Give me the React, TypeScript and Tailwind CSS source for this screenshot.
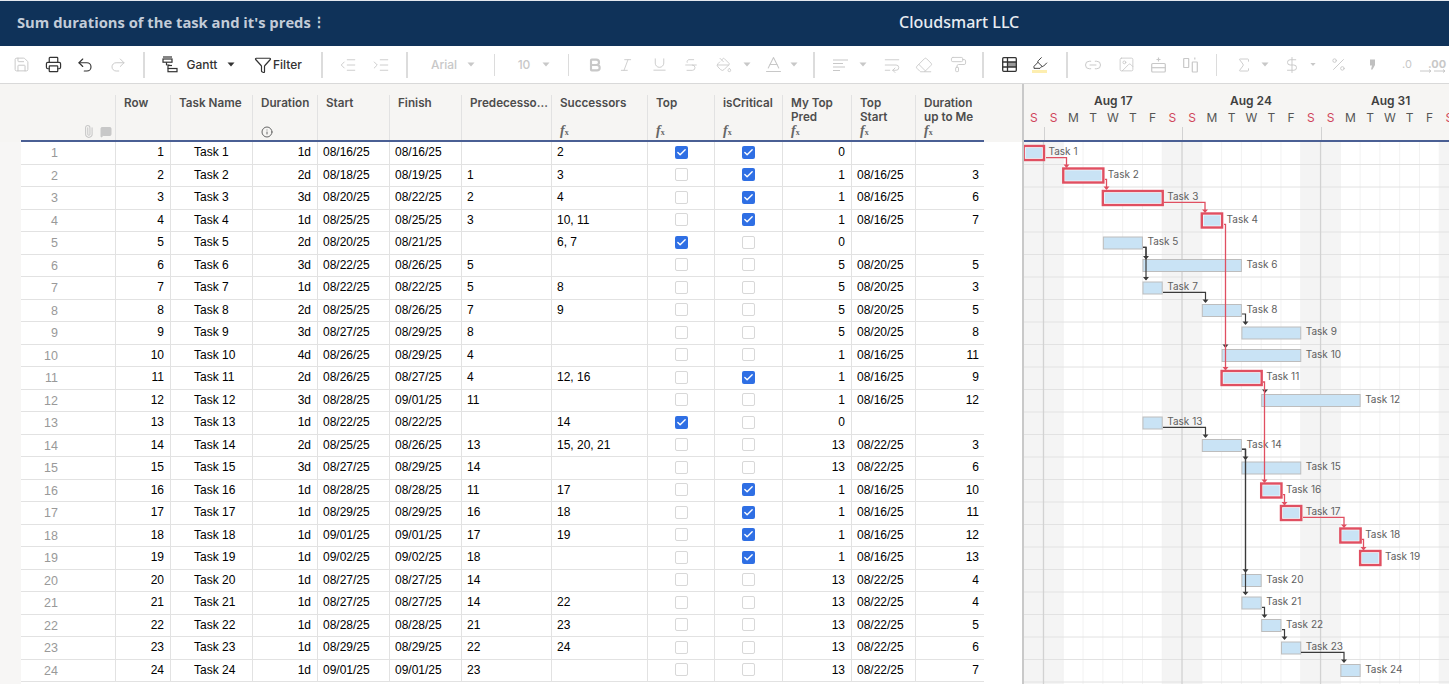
import type { ReactNode } from "react";
import {
  Baseline,
  Bold,
  DollarSign,
  Eraser,
  Highlighter,
  Image,
  IndentDecrease,
  IndentIncrease,
  Info,
  Italic,
  Link2,
  MessageSquare,
  PaintBucket,
  PaintRoller,
  Paperclip,
  Percent,
  Printer,
  Redo2,
  Save,
  Sigma,
  Strikethrough,
  Underline,
  Undo2,
  WrapText,
  Funnel,
  Check,
} from "lucide-react";

type Task = {
  id: number;
  dur: string;
  start: string;
  finish: string;
  pred: string;
  succ: string;
  top: boolean;
  crit: boolean;
  myTop: number;
  topStart: string;
  upTo: string;
  from: number;
  to: number;
};

const t = (
  id: number,
  dur: string,
  start: string,
  finish: string,
  pred: string,
  succ: string,
  top: boolean,
  crit: boolean,
  myTop: number,
  topStart: string,
  upTo: string,
  from: number,
  to: number,
): Task => ({ id, dur, start, finish, pred, succ, top, crit, myTop, topStart, upTo, from, to });

const tasks: Task[] = [
  t(1, "1d", "08/16/25", "08/16/25", "", "2", true, true, 0, "", "", 0, 1),
  t(2, "2d", "08/18/25", "08/19/25", "1", "3", false, true, 1, "08/16/25", "3", 2, 4),
  t(3, "3d", "08/20/25", "08/22/25", "2", "4", false, true, 1, "08/16/25", "6", 4, 7),
  t(4, "1d", "08/25/25", "08/25/25", "3", "10, 11", false, true, 1, "08/16/25", "7", 9, 10),
  t(5, "2d", "08/20/25", "08/21/25", "", "6, 7", true, false, 0, "", "", 4, 6),
  t(6, "3d", "08/22/25", "08/26/25", "5", "", false, false, 5, "08/20/25", "5", 6, 11),
  t(7, "1d", "08/22/25", "08/22/25", "5", "8", false, false, 5, "08/20/25", "3", 6, 7),
  t(8, "2d", "08/25/25", "08/26/25", "7", "9", false, false, 5, "08/20/25", "5", 9, 11),
  t(9, "3d", "08/27/25", "08/29/25", "8", "", false, false, 5, "08/20/25", "8", 11, 14),
  t(10, "4d", "08/26/25", "08/29/25", "4", "", false, false, 1, "08/16/25", "11", 10, 14),
  t(11, "2d", "08/26/25", "08/27/25", "4", "12, 16", false, true, 1, "08/16/25", "9", 10, 12),
  t(12, "3d", "08/28/25", "09/01/25", "11", "", false, false, 1, "08/16/25", "12", 12, 17),
  t(13, "1d", "08/22/25", "08/22/25", "", "14", true, false, 0, "", "", 6, 7),
  t(14, "2d", "08/25/25", "08/26/25", "13", "15, 20, 21", false, false, 13, "08/22/25", "3", 9, 11),
  t(15, "3d", "08/27/25", "08/29/25", "14", "", false, false, 13, "08/22/25", "6", 11, 14),
  t(16, "1d", "08/28/25", "08/28/25", "11", "17", false, true, 1, "08/16/25", "10", 12, 13),
  t(17, "1d", "08/29/25", "08/29/25", "16", "18", false, true, 1, "08/16/25", "11", 13, 14),
  t(18, "1d", "09/01/25", "09/01/25", "17", "19", false, true, 1, "08/16/25", "12", 16, 17),
  t(19, "1d", "09/02/25", "09/02/25", "18", "", false, true, 1, "08/16/25", "13", 17, 18),
  t(20, "1d", "08/27/25", "08/27/25", "14", "", false, false, 13, "08/22/25", "4", 11, 12),
  t(21, "1d", "08/27/25", "08/27/25", "14", "22", false, false, 13, "08/22/25", "4", 11, 12),
  t(22, "1d", "08/28/25", "08/28/25", "21", "23", false, false, 13, "08/22/25", "5", 12, 13),
  t(23, "1d", "08/29/25", "08/29/25", "22", "24", false, false, 13, "08/22/25", "6", 13, 14),
  t(24, "1d", "09/01/25", "09/01/25", "23", "", false, false, 13, "08/22/25", "7", 16, 17),
];

const RED = "#e04f61";
const DARK = "#3a3a3a";
const ROW = 22.5;
const DAY = 19.79;
const X0 = 1023.7;

// elbow links, measured off the chart: [startX, startY, elbowX, tipY]
const redLinks = [
  [1046, 157.7, 1066.5, 167],
  [1105, 179.3, 1106.5, 189],
  [1164, 202.3, 1205, 212],
  [1224, 224.3, 1225.5, 369.5],
  [1263, 382, 1264.5, 482],
  [1283, 494.7, 1284.5, 504.5],
  [1303, 517.3, 1344, 527],
  [1362, 539.3, 1363.5, 549.5],
];
const darkLinks = [
  [1143, 247.3, 1146, 258.5],
  [1143, 247.3, 1146, 279.5],
  [1163, 292.3, 1205.5, 302],
  [1242, 314, 1245.5, 324],
  [1225, 345, 1225.5, 347],
  [1265, 390, 1265, 392],
  [1163, 427.3, 1205.5, 437],
  [1242, 449.3, 1245.5, 459],
  [1242, 449.3, 1245.5, 571.7],
  [1242, 449.3, 1245.5, 594.3],
  [1262, 607.3, 1264.5, 617],
  [1282, 629.7, 1284.5, 639],
  [1301, 652.3, 1344, 662],
];

const sep = "h-[26px] w-[2px] bg-[#dcdcdc]";
const dis = "text-[#c8c8c8]";

function Slot({ className, children }: { className: string; children?: ReactNode }) {
  return <div className={`flex h-full shrink-0 items-center justify-center whitespace-nowrap ${className}`}>{children}</div>;
}

function Caret({ dark }: { dark?: boolean }) {
  return (
    <svg width="8" height="5" viewBox="0 0 8 5" className={dark ? "text-[#333]" : "text-[#c8c8c8]"}>
      <path d="M0.5 0.5h7L4 4.5z" fill="currentColor" />
    </svg>
  );
}

function GanttIcon() {
  return (
    <svg width="16" height="17" viewBox="0 0 16 17" fill="none" stroke="#333" strokeWidth="1.2">
      <path d="M1 1h9" />
      <rect x="1" y="3" width="9" height="3.2" />
      <path d="M4.5 6.2v3M7.5 9h-3" />
      <path d="M6 9.5v3" />
      <path d="M6 9.5h4" />
      <rect x="6" y="12.5" width="9" height="3.2" />
    </svg>
  );
}

function GridIcon() {
  return (
    <svg width="15" height="15" viewBox="0 0 15 15" fill="none" stroke="#333" strokeWidth="1.3">
      <rect x="5.5" y="5" width="9" height="5" fill="#9a9a9a" stroke="none" />
      <rect x="0.7" y="0.7" width="13.6" height="13.6" rx="1" />
      <path d="M0.7 5h13.6M0.7 10h13.6M5.5 0.7v13.6" />
    </svg>
  );
}

function RowInsertIcon() {
  return (
    <svg width="15" height="16" viewBox="0 0 15 16" fill="none" stroke="#c8c8c8" strokeWidth="1.2">
      <path d="M7.5 0.5v4M5.5 2.5h4" />
      <rect x="0.7" y="6.5" width="13.6" height="8.5" rx="1" />
      <path d="M0.7 10.7h13.6" />
    </svg>
  );
}

function ColumnsIcon() {
  return (
    <svg width="15" height="16" viewBox="0 0 15 16" fill="none" stroke="#c8c8c8" strokeWidth="1.2">
      <rect x="0.7" y="1.5" width="5" height="9" rx="0.5" />
      <rect x="9.3" y="5" width="5" height="10" rx="0.5" />
      <path d="M11.8 0.5v2" />
    </svg>
  );
}

function CommaIcon() {
  return (
    <svg width="7" height="11" viewBox="0 0 7 11">
      <path d="M1 0.5h5v5.5L3.5 10.5H2L3 6.5H1z" fill="#c0c0c0" />
    </svg>
  );
}

function Decimal({ label, className }: { label: string; className: string }) {
  return (
    <Slot className={`relative font-['Inter',sans-serif] text-[11px] ${dis} ${className}`}>
      {label}
      <svg width="12" height="4" viewBox="0 0 12 4" className="absolute bottom-[10px] right-[-2px]" fill="none" stroke="#c8c8c8">
        <path d="M0 2h11M9 0.5L11 2L9 3.5" />
      </svg>
    </Slot>
  );
}

function Toolbar() {
  return (
    <div className="flex h-[38px] items-center border-b border-[#d9d9d9] bg-white pl-[5px]">
      <Slot className={`w-[32px] ${dis}`}><Save size={17} strokeWidth={1.4} /></Slot>
      <Slot className="w-[32px] text-[#333]"><Printer size={17} strokeWidth={1.7} /></Slot>
      <Slot className="w-[32px] text-[#333]"><Undo2 size={18} strokeWidth={1.5} /></Slot>
      <Slot className={`w-[34px] ${dis}`}><Redo2 size={18} strokeWidth={1.3} /></Slot>
      <Slot className="w-[18px]"><div className={sep} /></Slot>
      <Slot className="w-[34px]"><GanttIcon /></Slot>
      <Slot className="w-[30px] font-['Inter',sans-serif] text-[12px] font-medium text-[#333]">Gantt</Slot>
      <Slot className="w-[28px]"><Caret dark /></Slot>
      <Slot className="w-[66px] gap-[1px] font-['Inter',sans-serif] text-[12px] font-medium text-[#333]">
        <Funnel size={18} strokeWidth={1.6} />
        Filter
      </Slot>
      <Slot className="w-[22px]"><div className={sep} /></Slot>
      <Slot className={`w-[30px] ${dis}`}><IndentDecrease size={18} strokeWidth={1.2} /></Slot>
      <Slot className={`w-[36px] ${dis}`}><IndentIncrease size={18} strokeWidth={1.2} /></Slot>
      <Slot className="w-[16px]"><div className={sep} /></Slot>
      <Slot className={`ml-[9px] w-[40px] font-['Inter',sans-serif] text-[12px] font-medium ${dis}`}>Arial</Slot>
      <Slot className="w-[14px]"><Caret /></Slot>
      <Slot className="w-[32px]"><div className="h-[22px] w-[1px] bg-[#dcdcdc]" /></Slot>
      <Slot className={`w-[28px] font-['Inter',sans-serif] text-[12px] font-medium ${dis}`}>10</Slot>
      <Slot className="w-[16px]"><Caret /></Slot>
      <Slot className="w-[28px]"><div className="h-[22px] w-[1px] bg-[#dcdcdc]" /></Slot>
      <Slot className={`w-[26px] ${dis}`}><Bold size={16} strokeWidth={3.2} /></Slot>
      <Slot className={`w-[36px] ${dis}`}><Italic size={16} strokeWidth={1.3} /></Slot>
      <Slot className={`w-[30px] ${dis}`}><Underline size={17} strokeWidth={1.3} /></Slot>
      <Slot className={`w-[34px] ${dis}`}><Strikethrough size={16} strokeWidth={1.3} /></Slot>
      <Slot className={`w-[32px] ${dis}`}><PaintBucket size={16} strokeWidth={1.3} /></Slot>
      <Slot className="w-[14px]"><Caret /></Slot>
      <Slot className={`ml-[4px] w-[30px] ${dis}`}><Baseline size={21} strokeWidth={1.2} /></Slot>
      <Slot className="w-[12px]"><Caret /></Slot>
      <Slot className="w-[28px]"><div className={sep} /></Slot>
      <Slot className={`w-[24px] ${dis}`}>
        <svg width="15" height="12" viewBox="0 0 15 12" fill="none" stroke="currentColor" strokeWidth="1.2"><path d="M0 1h15M0 4.5h10M0 8h12M0 11.5h7" /></svg>
      </Slot>
      <Slot className="w-[22px]"><Caret /></Slot>
      <Slot className={`w-[36px] ${dis}`}><WrapText size={18} strokeWidth={1.2} /></Slot>
      <Slot className={`w-[28px] ${dis}`}><Eraser size={18} strokeWidth={1.2} /></Slot>
      <Slot className={`w-[40px] ${dis}`}><PaintRoller size={17} strokeWidth={1.3} /></Slot>
      <Slot className="w-[10px]"><div className={sep} /></Slot>
      <Slot className="w-[42px]"><GridIcon /></Slot>
      <Slot className="relative w-[20px] text-[#333]">
        <Highlighter size={16} strokeWidth={1.4} className="-translate-y-[2px]" />
        <div className="absolute left-[2px] top-[24px] h-[3px] w-[15px] bg-[#fdeeb0]" />
      </Slot>
      <Slot className="w-[34px]"><div className={sep} /></Slot>
      <Slot className={`w-[18px] ${dis}`}><Link2 size={18} strokeWidth={1.3} /></Slot>
      <Slot className={`w-[48px] ${dis}`}><Image size={17} strokeWidth={1.2} /></Slot>
      <Slot className="w-[16px]"><RowInsertIcon /></Slot>
      <Slot className="w-[48px]"><ColumnsIcon /></Slot>
      <Slot className="w-[4px]"><div className="h-[22px] w-[1px] bg-[#dcdcdc]" /></Slot>
      <Slot className={`ml-[14px] w-[24px] ${dis}`}><Sigma size={18} strokeWidth={1.2} /></Slot>
      <Slot className="w-[18px]"><Caret /></Slot>
      <Slot className={`w-[36px] ${dis}`}><DollarSign size={18} strokeWidth={1.3} /></Slot>
      <Slot className="w-[6px]"><Caret /></Slot>
      <Slot className={`w-[44px] ${dis}`}><Percent size={17} strokeWidth={1.3} /></Slot>
      <Slot className="w-[24px]"><CommaIcon /></Slot>
      <Decimal label=".0" className="w-[46px]" />
      <Decimal label=".00" className="w-[14px] font-bold" />
    </div>
  );
}

function Fx() {
  return (
    <span className="-translate-y-[1px] font-['Liberation_Serif',serif] text-[14px] font-bold italic leading-none text-[#666]">
      f<span className="text-[8px] not-italic">x</span>
    </span>
  );
}

const cols = [
  { w: "w-[55px]", label: "Row" },
  { w: "w-[82px]", label: "Task Name" },
  { w: "w-[65px]", label: "Duration", foot: <Info size={12} className="text-[#666]" /> },
  { w: "w-[72px]", label: "Start" },
  { w: "w-[72px]", label: "Finish" },
  { w: "w-[90px]", label: "Predecesso..." },
  { w: "w-[96px]", label: "Successors", foot: <Fx /> },
  { w: "w-[67px]", label: "Top", foot: <Fx /> },
  { w: "w-[68px]", label: "isCritical", foot: <Fx /> },
  { w: "w-[69px]", label: "My Top Pred", foot: <Fx /> },
  { w: "w-[64px] pr-[16px]", label: "Top Start", foot: <Fx /> },
  { w: "w-[68px]", label: "Duration up to Me", foot: <Fx /> },
];

function SheetHeader() {
  return (
    <div className="ml-[21px] flex h-[58px] w-[963px] items-end border-b-2 border-[#4a5f94] font-['Inter',sans-serif] text-[11.7px] font-semibold leading-[14px] text-[#4d4d4d]">
      <div className="flex h-[45px] w-[95px] items-end justify-end gap-[5px] border-r border-[#e2e2e2] pb-[2px] pr-[3px] text-[#c8c8c8]">
        <Paperclip size={13} className="-rotate-45" />
        <MessageSquare size={12} fill="currentColor" />
      </div>
      {cols.map((c) => (
        <div key={c.label} className={`flex h-[45px] flex-col justify-between border-r border-[#e2e2e2] pb-[2px] pl-[8px] pt-[1px] last:border-r-0 ${c.w}`}>
          <div className={c.label === "Predecesso..." ? "whitespace-nowrap" : ""}>{c.label}</div>
          <div className="flex h-[13px] items-center">{c.foot}</div>
        </div>
      ))}
    </div>
  );
}

function Box({ on }: { on: boolean }) {
  return on ? (
    <span className="flex h-[13px] w-[13px] items-center justify-center rounded-[2px] bg-[#2f6fe4] text-white">
      <Check size={11} strokeWidth={3} />
    </span>
  ) : (
    <span className="h-[13px] w-[13px] rounded-[2px] border border-[#d8d8d8] bg-white" />
  );
}

function SheetRow({ task }: { task: Task }) {
  const cell = "flex h-full items-center border-r border-[#e2e2e2] pb-[1px]";
  const right = `${cell} justify-end pr-[6px]`;
  const left = `${cell} pl-[5px]`;
  return (
    <div className="flex h-[22.5px] w-[963px] border-b border-[#e2e2e2] font-['Liberation_Sans',Arial,sans-serif] text-[12px] text-black">
      <div className={`${cell} w-[95px] justify-end pr-[57px] pt-[3px] text-[12.5px] text-[#999]`}>{task.id}</div>
      <div className={`${right} w-[55px]`}>{task.id}</div>
      <div className={`${cell} w-[82px] pl-[23px]`}>Task {task.id}</div>
      <div className={`${right} w-[65px]`}>{task.dur}</div>
      <div className={`${left} w-[72px]`}>{task.start}</div>
      <div className={`${left} w-[72px]`}>{task.finish}</div>
      <div className={`${left} w-[90px]`}>{task.pred}</div>
      <div className={`${left} w-[96px]`}>{task.succ}</div>
      <div className={`${cell} w-[67px] justify-center`}><Box on={task.top} /></div>
      <div className={`${cell} w-[68px] justify-center`}><Box on={task.crit} /></div>
      <div className={`${right} w-[69px]`}>{task.myTop}</div>
      <div className={`${left} w-[64px]`}>{task.topStart}</div>
      <div className="flex h-full w-[68px] items-center justify-end pb-[1px] pr-[5px]">{task.upTo}</div>
    </div>
  );
}

function GanttHeader() {
  const days = Array.from({ length: 22 }, (_, i) => "SSMTWTF"[i % 7]);
  return (
    <div className="relative h-[58px] overflow-hidden bg-[#f6f5f3] font-['Inter',sans-serif]">
      <div className="flex h-[34px] items-end text-[12px] font-semibold leading-[14px] text-[#3f3f3f]">
        <div className="w-[178px] pb-[10px] pl-[70px]">Aug 17</div>
        <div className="w-[138px] pb-[10px] pl-[28px]">Aug 24</div>
        <div className="w-[109px] pb-[10px] pl-[31px]">Aug 31</div>
      </div>
      <div className="-mt-[7px] flex text-[12px] leading-[14px]">
        {days.map((d, i) => (
          <div key={i} className={`w-[19.79px] shrink-0 text-center ${d === "S" ? "text-[#d0455a]" : "text-[#555]"}`}>{d}</div>
        ))}
      </div>
      <div className="absolute bottom-0 left-0 h-[2px] w-full bg-[#4a5f94]" />
      <div className="absolute bottom-[2px] left-[19.5px] h-[13px] w-[1px] bg-[#d2d2d2]" />
      <div className="absolute bottom-[2px] left-[158px] h-[13px] w-[1px] bg-[#d2d2d2]" />
      <div className="absolute bottom-[2px] left-[296.5px] h-[13px] w-[1px] bg-[#d2d2d2]" />
    </div>
  );
}

function Arrow({ link, color, width }: { link: number[]; color: string; width: number }) {
  const [sx, sy, ex, ty] = link;
  return (
    <g>
      <path d={`M${sx} ${sy}H${ex}V${ty}`} fill="none" stroke={color} strokeWidth={width} />
      <path d={`M${ex - 3} ${ty - 2.5}h6l-3 3.5z`} fill={color} />
    </g>
  );
}

function GanttChart() {
  const dayIdx = Array.from({ length: 22 }, (_, i) => i);
  const rowIdx = Array.from({ length: 25 }, (_, i) => i);
  return (
    <svg width="425" height="542" viewBox="1024 142 425 542" className="block">
      <rect x="1024" y="142" width="425" height="542" fill="#fff" />
      {dayIdx
        .filter((i) => i % 7 < 2)
        .map((i) => (
          <rect key={i} x={X0 + i * DAY} y="142" width={DAY} height="542" fill="#f4f4f4" />
        ))}
      {dayIdx.map((i) => (
        <path key={i} d={`M${X0 + i * DAY} 142V684`} stroke="#f2f2f2" strokeWidth="1" />
      ))}
      {rowIdx.map((i) => (
        <path key={i} d={`M1024 ${164.5 + i * ROW}H1449`} stroke="#e2e2e2" strokeWidth="1" />
      ))}
      {[1, 8, 15].map((i) => (
        <path key={i} d={`M${X0 + i * DAY} 142V684`} stroke="#d2d2d2" strokeWidth="1.3" />
      ))}
      {tasks.map((task, i) => {
        const top = 142 + i * ROW;
        const x = X0 + task.from * DAY;
        const w = (task.to - task.from) * DAY;
        return (
          <g key={task.id}>
            {task.crit ? (
              <>
                <rect x={x} y={top + 4} width={w + 0.5} height={14} fill="#fff" stroke={RED} strokeWidth="2.4" />
                <rect x={x + 1.8} y={top + 5.8} width={w - 3.1} height={10.4} fill="#c9e3f5" />
              </>
            ) : (
              <rect x={x + 0.5} y={top + 5} width={w - 0.5} height={12} fill="#c9e3f5" stroke="#bdbdbd" strokeWidth="1" />
            )}
            <text x={x + w + 5} y={top + 13} fontFamily="Inter, sans-serif" fontSize="10" fill="#606060">
              Task {task.id}
            </text>
          </g>
        );
      })}
      {darkLinks.map((l, i) => (
        <Arrow key={i} link={l} color={DARK} width={1.2} />
      ))}
      {redLinks.map((l, i) => (
        <Arrow key={i} link={l} color={RED} width={1.3} />
      ))}
    </svg>
  );
}

export default function App() {
  return (
    <div className="h-[684px] w-[1449px] overflow-hidden bg-white">
      <div className="relative flex h-[46px] items-center border-t border-[#e4e8ee] bg-[#0f3259] pb-[3px] pl-[17px]">
        <div className="font-['Open_Sans',sans-serif] text-[14.75px] font-bold text-[#c3ccd8]">Sum durations of the task and it's preds</div>
        <div className="ml-[1px] text-[14px] font-bold leading-none text-[#c3ccd8]">⋮</div>
        <div className="absolute left-[899px] font-['Noto_Sans',sans-serif] text-[16px] font-medium text-[#e8ecf1]">Cloudsmart LLC</div>
      </div>
      <Toolbar />
      <div className="flex">
        <div className="w-[1022px] shrink-0">
          <div className="bg-[#f6f5f3]">
            <SheetHeader />
          </div>
          <div className="flex">
            <div className="h-[542px] w-[21px] bg-[#f7f6f5]" />
            <div>
              {tasks.map((task) => (
                <SheetRow key={task.id} task={task} />
              ))}
            </div>
          </div>
        </div>
        <div className="w-[2px] shrink-0 bg-[#c9c9c9]" />
        <div className="w-[425px] shrink-0">
          <GanttHeader />
          <GanttChart />
        </div>
      </div>
    </div>
  );
}
